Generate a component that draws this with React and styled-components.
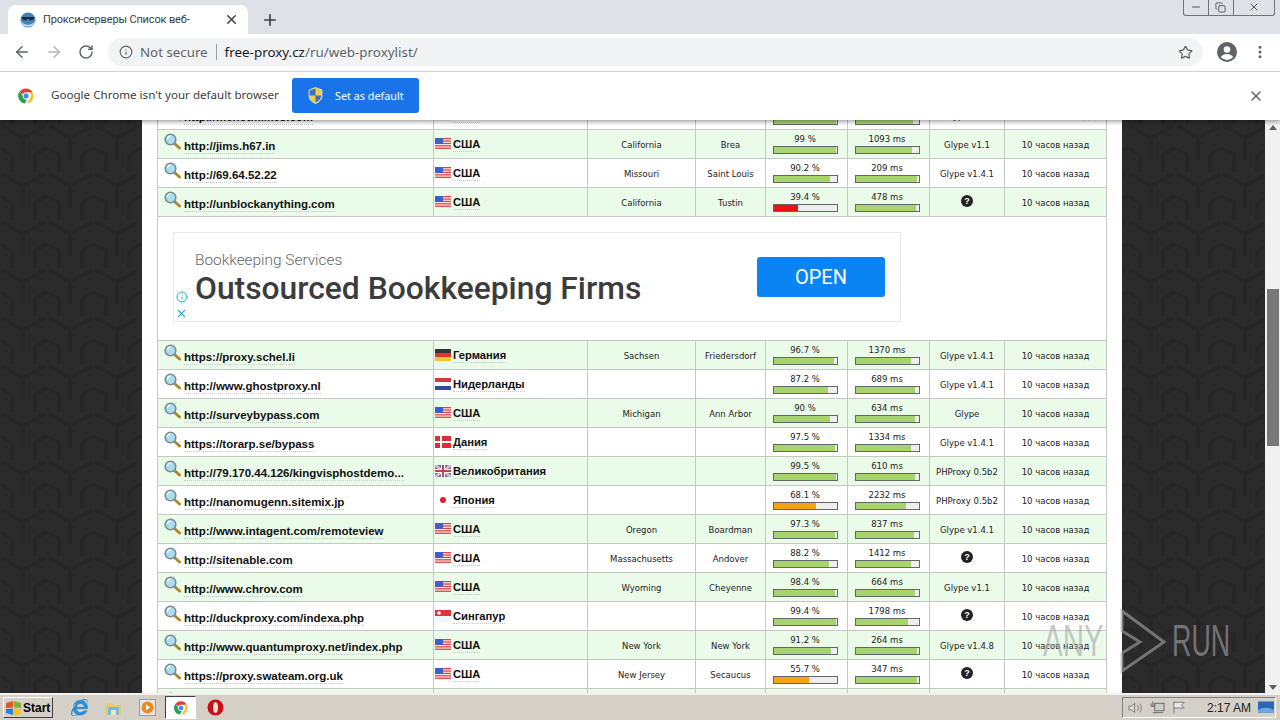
import * as React from "react";
import styled, { createGlobalStyle } from "styled-components";
import { ArrowLeft, ArrowRight, RotateCw, Info, Star, X, Plus, EllipsisVertical, Minus, Copy } from "lucide-react";
import { FaInternetExplorer } from "react-icons/fa";

const tile = encodeURIComponent(
  `<svg xmlns="http://www.w3.org/2000/svg" width="47" height="48"><rect width="47" height="48" fill="#2b2b2b"/><g fill="none" stroke="#262626" stroke-width="4"><path d="M2 6l21 12 22-12M23 18v22M0 28l12 7v13M47 28l-12 7v13M12 0v4M35 0v4"/></g></svg>`
);

const GlobalStyle = createGlobalStyle`
  html, body {
    margin: 0;
    padding: 0;
    overflow: hidden;
  }
  * {
    box-sizing: border-box;
  }
`;

const Screen = styled.div`
  width: 1280px;
  height: 720px;
  display: flex;
  flex-direction: column;
  overflow: hidden;
  position: relative;
  font-family: "Noto Sans", sans-serif;
  background: #fff;
`;

const TabStrip = styled.div`
  height: 34px;
  background: #dee1e6;
  display: flex;
  align-items: flex-end;
  padding-left: 8px;
  position: relative;
`;

const Tab = styled.div`
  width: 240px;
  height: 29px;
  background: #fff;
  border-radius: 8px 8px 0 0;
  display: flex;
  align-items: center;
  padding: 0 9px 0 12px;
  gap: 7px;
`;

const TabTitle = styled.span`
  flex: 1;
  font-family: Roboto, sans-serif;
  font-size: 11px;
  letter-spacing: -0.15px;
  color: #3c4043;
  white-space: nowrap;
  overflow: hidden;
`;

const NewTab = styled.div`
  width: 44px;
  height: 29px;
  display: flex;
  align-items: center;
  justify-content: center;
  color: #3c4043;
`;

const WindowControls = styled.div`
  position: absolute;
  top: -1px;
  right: 5px;
  width: 92px;
  height: 17px;
  display: flex;
  border: 1px solid #6e7379;
  border-top: none;
  border-radius: 0 0 3px 3px;
`;

const WindowButton = styled.div`
  flex: ${(props) => props.$grow || 1};
  display: flex;
  align-items: center;
  justify-content: center;
  color: #555;
  border-left: ${(props) => (props.$first ? "none" : "1px solid #6e7379")};
`;

const Toolbar = styled.div`
  height: 38px;
  background: #fff;
  border-bottom: 1px solid #dadce0;
  display: flex;
  align-items: center;
  padding: 0 12px 1px 12px;
`;

const NavButton = styled.div`
  width: 20px;
  height: 20px;
  margin-right: 12px;
  display: flex;
  align-items: center;
  justify-content: center;
  color: ${(props) => (props.$disabled ? "#b4b7bb" : "#5f6368")};
`;

const Omnibox = styled.div`
  width: 1095px;
  height: 28px;
  background: #f1f3f4;
  border-radius: 14px;
  display: flex;
  align-items: center;
  padding: 0 10px 0 11px;
  font-size: 13.4px;
`;

const NotSecure = styled.span`
  color: #5f6368;
  margin-left: 7px;
  font-size: 13.3px;
`;

const Divider = styled.span`
  width: 1px;
  height: 16px;
  background: #9aa0a6;
  margin: 0 8px 0 8px;
`;

const Host = styled.span`
  color: #202124;
`;

const UrlPath = styled.span`
  color: #5f6368;
`;

const Spacer = styled.div`
  flex: 1;
`;

const ToolIcons = styled.div`
  display: flex;
  align-items: center;
  margin-left: 14px;
  gap: 15px;
  color: #5f6368;
`;

const InfoBar = styled.div`
  height: 48px;
  background: #fff;
  display: flex;
  align-items: center;
  padding: 0 16px 1px 17px;
  position: relative;
  z-index: 2;
  box-shadow: 0 2px 4px rgba(0, 0, 0, 0.35);
`;

const InfoText = styled.span`
  font-size: 11.6px;
  color: #3c4043;
  margin: 0 0 2px 16px;
  width: 241px;
  white-space: nowrap;
`;

const DefaultButton = styled.div`
  width: 127px;
  height: 35px;
  background: #1a73e8;
  border-radius: 3px;
  display: flex;
  align-items: center;
  padding: 0 0 1px 16px;
  gap: 12px;
  color: #fff;
  font-size: 10.8px;
`;

const Body = styled.div`
  flex: 1;
  display: flex;
  min-height: 0;
  position: relative;
`;

const Page = styled.div`
  flex: 1;
  overflow: hidden;
  padding-left: 142px;
  background: #2b2b2b url("data:image/svg+xml,${tile}");
`;

const Sheet = styled.div`
  width: 980px;
  height: 100%;
  background: #fff;
  padding: 0 15px;
  overflow: hidden;
`;

const Table = styled.table`
  width: 949px;
  margin-top: -20px;
  border-collapse: collapse;
  table-layout: fixed;
  font-family: "DejaVu Sans", sans-serif;
  font-size: 8.5px;
  color: #222;
`;

const Row = styled.tr`
  height: 29px;
  background: ${(props) => (props.$odd ? "#eafbea" : "#fff")};
`;

const Cell = styled.td`
  border: 1px solid #c3c9c3;
  padding: 0;
  text-align: center;
  vertical-align: middle;
  overflow: hidden;
  white-space: nowrap;
`;

const TextCell = styled(Cell)`
  padding-top: 2px;
`;

const UrlCell = styled.div`
  display: flex;
  align-items: flex-start;
  height: 28px;
  padding: 3px 0 0 6px;
`;

const UrlLink = styled.span`
  font-family: "Liberation Sans", sans-serif;
  font-weight: 700;
  font-size: 11.5px;
  color: #111;
  margin: 6px 0 0 3px;
  line-height: 14px;
  border-bottom: 1px dotted #c8c8c8;
`;

const CountryCell = styled.div`
  display: flex;
  align-items: center;
  height: 28px;
  padding-left: 1px;
  gap: 2px;
`;

const CountryName = styled.span`
  font-family: "Liberation Sans", sans-serif;
  font-weight: 700;
  font-size: 11.2px;
  color: #111;
  line-height: 13px;
  margin-top: 2px;
  border-bottom: 1px dotted #c8c8c8;
`;

const MeterWrap = styled.div`
  display: flex;
  flex-direction: column;
  align-items: center;
  padding: 0 3px 2px 0;
`;

const MeterLabel = styled.span`
  line-height: 13px;
  height: 13px;
`;

const MeterTrack = styled.div`
  width: 65px;
  height: 8px;
  background: #eee;
  border: 1px solid #666;
`;

const MeterFill = styled.div`
  height: 100%;
  background: ${(props) => props.$color};
`;

const HelpDot = styled.span`
  display: inline-flex;
  width: 12px;
  height: 12px;
  margin-bottom: 5px;
  border-radius: 50%;
  background: #222;
  color: #fff;
  font-family: "Liberation Sans", sans-serif;
  font-size: 9px;
  font-weight: 700;
  align-items: center;
  justify-content: center;
`;

const AdCell = styled.td`
  border: 1px solid #c3c9c3;
  height: 124px;
  padding: 15px 0 18px 15px;
  background: #fff;
`;

const AdBox = styled.div`
  width: 728px;
  height: 90px;
  border: 1px solid #e8e8e8;
  position: relative;
  display: flex;
  align-items: center;
  padding: 0 15px 0 21px;
  font-family: Roboto, sans-serif;
`;

const AdText = styled.div`
  flex: 1;
  padding-top: 2px;
`;

const AdKicker = styled.div`
  font-size: 15.4px;
  font-weight: 300;
  color: #666;
  line-height: 20px;
`;

const AdTitle = styled.div`
  font-size: 31.8px;
  font-weight: 500;
  color: #3c3c3c;
  line-height: 38px;
  margin-top: -1px;
`;

const AdButton = styled.div`
  width: 128px;
  height: 40px;
  padding-bottom: 1px;
  background: #0a84f2;
  border-radius: 3px;
  color: #fff;
  font-size: 20px;
  display: flex;
  align-items: center;
  justify-content: center;
`;

const AdChoices = styled.div`
  position: absolute;
  left: 1px;
  bottom: 1px;
  display: flex;
  flex-direction: column;
  gap: 4px;
  align-items: center;
  color: #1fb0c9;
`;

const Scrollbar = styled.div`
  width: 15px;
  background: #f1f1f1;
  display: flex;
  flex-direction: column;
  align-items: center;
  padding-bottom: 3px;
`;

const ScrollArrow = styled.div`
  width: 0;
  height: 0;
  margin-top: ${(props) => (props.$down ? "auto" : "5px")};
  border-left: 4px solid transparent;
  border-right: 4px solid transparent;
  border-bottom: ${(props) => (props.$down ? "none" : "5px solid #606060")};
  border-top: ${(props) => (props.$down ? "5px solid #606060" : "none")};
`;

const ScrollThumb = styled.div`
  width: 12px;
  height: 157px;
  margin-top: 159px;
  background: #787878;
`;

const Watermark = styled.div`
  position: absolute;
  right: 50px;
  bottom: 20px;
  display: flex;
  align-items: center;
  color: rgba(165, 165, 165, 0.6);
  font-family: "Liberation Sans", sans-serif;
  font-size: 44px;
  line-height: 1;
  pointer-events: none;
`;

const WatermarkWord = styled.span`
  display: inline-block;
  transform: scaleX(${(props) => props.$scale});
  transform-origin: left;
  width: ${(props) => props.$width}px;
  margin: ${(props) => props.$margin};
`;

const Taskbar = styled.div`
  height: 27px;
  background: #d4d0c8;
  border-top: 2px solid #f4f2ec;
  display: flex;
  align-items: center;
  padding: 0 4px 0 3px;
  position: relative;
  z-index: 2;
`;

const StartButton = styled.div`
  width: 50px;
  height: 21px;
  display: flex;
  align-items: center;
  gap: 1px;
  padding-left: 1px;
  font-family: "Liberation Sans", sans-serif;
  font-weight: 700;
  font-size: 12px;
  color: #000;
  background: #d4d0c8;
  border: 1px solid;
  border-color: #fff #404040 #404040 #fff;
`;

const QuickLaunch = styled.div`
  display: flex;
  align-items: center;
  margin-left: 18px;
  gap: 17px;
`;

const ActiveTask = styled.div`
  width: 31px;
  height: 23px;
  margin: 0 -6px 0 -8px;
  background: #fff;
  border: 1px solid;
  border-color: #404040 #fff #fff #404040;
  display: flex;
  align-items: center;
  justify-content: center;
`;

const Tray = styled.div`
  margin-left: auto;
  width: 154px;
  height: 21px;
  border: 1px solid;
  border-color: #808080 #fff #fff #808080;
  display: flex;
  align-items: center;
  padding: 0 1px 0 5px;
  gap: 7px;
  font-family: "Liberation Sans", sans-serif;
  font-size: 12px;
  color: #222;
`;

const Clock = styled.span`
  margin-left: 13px;
  white-space: nowrap;
`;

const ChromeLogo = ({ size = 18 }) => (
  <svg width={size} height={size} viewBox="0 0 48 48">
    <path d="M24 4a20 20 0 0 1 17.3 10H24a10 10 0 0 0-9.4 6.6L7.7 11A20 20 0 0 1 24 4z" fill="#db4437" />
    <path d="M41.3 14A20 20 0 0 1 26 43.9l8.6-14.9A10 10 0 0 0 32 14z" fill="#fbc02d" />
    <path d="M7.7 11l8.6 14.9A10 10 0 0 0 26 33.8L21.3 43.8A20 20 0 0 1 7.7 11z" fill="#2e9e4f" />
    <circle cx="24" cy="24" r="8" fill="#4285f4" stroke="#fff" strokeWidth="2" />
  </svg>
);

const UacShield = () => (
  <svg width="15" height="17" viewBox="0 0 15 17">
    <path d="M7.5 0.5L14 3v5.5c0 4-3 6.5-6.5 8C4 15 1 12.5 1 8.5V3z" fill="#f2cc45" stroke="#dfe8f4" strokeWidth="0.8" />
    <path d="M7.5 1.5V8.5H1.6V3.6zM7.5 8.5H13.3C13 11.8 10.5 14 7.5 15.3z" fill="#3d6fc2" />
  </svg>
);

const Favicon = () => (
  <svg width="16" height="16" viewBox="0 0 16 16">
    <circle cx="8" cy="8" r="7.5" fill="#3f86b8" />
    <path d="M1 9c3 5 11 5 14 0v2c-2 5-12 5-14 0z" fill="#bcd8ea" />
    <path d="M1.5 5h13l-1 2.5-3.5 1L8 6.5 6 8.5 2.5 7.5z" fill="#1c2b38" />
  </svg>
);

const Account = () => (
  <svg width="20" height="20" viewBox="0 0 20 20">
    <circle cx="10" cy="10" r="10" fill="#5f6368" />
    <circle cx="10" cy="7.5" r="3.3" fill="#fff" />
    <path d="M3.8 15c1.5-2.3 4-3 6.2-3s4.7.7 6.2 3a8 8 0 0 1-12.4 0z" fill="#fff" />
  </svg>
);

const Magnifier = () => (
  <svg width="17" height="17" viewBox="0 0 17 17">
    <path d="M10.5 10.5l5 4.5" stroke="#a98a2c" strokeWidth="3" strokeLinecap="round" />
    <circle cx="6.5" cy="6.5" r="5.3" fill="#a9dcec" stroke="#7d8a90" strokeWidth="1.6" />
    <path d="M3.5 6a3.5 3.5 0 0 1 3-3" stroke="#e8f7fb" strokeWidth="1.3" fill="none" />
  </svg>
);

const FlagFrame = ({ children }) => (
  <svg width="16" height="12" viewBox="0 0 16 12">
    {children}
  </svg>
);

const flags = {
  us: (
    <FlagFrame>
      <rect width="16" height="12" rx="1" fill="#f4f4f4" />
      {[0, 2.4, 4.8, 7.2, 9.6].map((y) => (
        <rect key={y} y={y} width="16" height="1.3" fill="#d9453f" />
      ))}
      <rect width="8" height="6" fill="#3f5fc4" />
    </FlagFrame>
  ),
  de: (
    <FlagFrame>
      <rect width="16" height="4" fill="#333" />
      <rect y="4" width="16" height="4" fill="#d8372c" />
      <rect y="8" width="16" height="4" fill="#f2c230" />
    </FlagFrame>
  ),
  nl: (
    <FlagFrame>
      <rect width="16" height="4" fill="#cf3a3f" />
      <rect y="4" width="16" height="4" fill="#f6f6f6" />
      <rect y="8" width="16" height="4" fill="#2f4c9c" />
    </FlagFrame>
  ),
  dk: (
    <FlagFrame>
      <rect width="16" height="12" fill="#d8303a" />
      <rect x="5" width="2" height="12" fill="#fff" />
      <rect y="5" width="16" height="2" fill="#fff" />
    </FlagFrame>
  ),
  gb: (
    <FlagFrame>
      <rect width="16" height="12" fill="#6a7bb0" />
      <path d="M0 0l16 12M16 0L0 12" stroke="#fff" strokeWidth="2" />
      <path d="M0 0l16 12M16 0L0 12" stroke="#c8505a" strokeWidth="0.7" />
      <rect x="6" width="4" height="12" fill="#fff" />
      <rect y="4" width="16" height="4" fill="#fff" />
      <rect x="7" width="2" height="12" fill="#c8404a" />
      <rect y="5" width="16" height="2" fill="#c8404a" />
    </FlagFrame>
  ),
  jp: (
    <FlagFrame>
      <rect width="16" height="12" fill="#fff" />
      <circle cx="8" cy="6" r="3" fill="#e0202c" />
    </FlagFrame>
  ),
  sg: (
    <FlagFrame>
      <rect width="16" height="6" fill="#e0333c" />
      <rect y="6" width="16" height="6" fill="#f0f6f6" />
      <circle cx="4" cy="3" r="1.8" fill="#fff" />
    </FlagFrame>
  ),
};

const columns = [276, 154, 108, 70, 82, 82, 75, 102];

const meterColor = (value) => {
  if (value < 50) return "#ee1111";
  if (value < 70) return "#f5a314";
  return "#a6d46f";
};

const Meter = ({ label, value }) => (
  <MeterWrap>
    <MeterLabel>{label}</MeterLabel>
    <MeterTrack>
      <MeterFill $color={meterColor(value)} style={{ width: `${value}%` }} />
    </MeterTrack>
  </MeterWrap>
);

const topRows = [
  ["http://mehotmilkes.com", "us", "США", "California", "Brea", 99, 900, "Glype v1.1"],
  ["http://jims.h67.in", "us", "США", "California", "Brea", 99, 1093, "Glype v1.1"],
  ["http://69.64.52.22", "us", "США", "Missouri", "Saint Louis", 90.2, 209, "Glype v1.4.1"],
  ["http://unblockanything.com", "us", "США", "California", "Tustin", 39.4, 478, null],
];

const bottomRows = [
  ["https://proxy.schel.li", "de", "Германия", "Sachsen", "Friedersdorf", 96.7, 1370, "Glype v1.4.1"],
  ["http://www.ghostproxy.nl", "nl", "Нидерланды", "", "", 87.2, 689, "Glype v1.4.1"],
  ["http://surveybypass.com", "us", "США", "Michigan", "Ann Arbor", 90, 634, "Glype"],
  ["https://torarp.se/bypass", "dk", "Дания", "", "", 97.5, 1334, "Glype v1.4.1"],
  ["http://79.170.44.126/kingvisphostdemo...", "gb", "Великобритания", "", "", 99.5, 610, "PHProxy 0.5b2"],
  ["http://nanomugenn.sitemix.jp", "jp", "Япония", "", "", 68.1, 2232, "PHProxy 0.5b2"],
  ["http://www.intagent.com/remoteview", "us", "США", "Oregon", "Boardman", 97.3, 837, "Glype v1.4.1"],
  ["http://sitenable.com", "us", "США", "Massachusetts", "Andover", 88.2, 1412, null],
  ["http://www.chrov.com", "us", "США", "Wyoming", "Cheyenne", 98.4, 664, "Glype v1.1"],
  ["http://duckproxy.com/indexa.php", "sg", "Сингапур", "", "", 99.4, 1798, null],
  ["http://www.quantumproxy.net/index.php", "us", "США", "New York", "New York", 91.2, 264, "Glype v1.4.8"],
  ["https://proxy.swateam.org.uk", "us", "США", "New Jersey", "Secaucus", 55.7, 347, null],
  ["http://proxy.example.org", "us", "США", "", "", 90, 500, "Glype"],
];

const ProxyRow = ({ row, odd }) => {
  const [url, flag, country, region, city, uptime, ms, script] = row;
  return (
    <Row $odd={odd}>
      <Cell>
        <UrlCell>
          <Magnifier />
          <UrlLink>{url}</UrlLink>
        </UrlCell>
      </Cell>
      <Cell>
        <CountryCell>
          {flags[flag]}
          <CountryName>{country}</CountryName>
        </CountryCell>
      </Cell>
      <TextCell>{region}</TextCell>
      <TextCell>{city}</TextCell>
      <Cell>
        <Meter label={`${uptime} %`} value={uptime} />
      </Cell>
      <Cell>
        <Meter label={`${ms} ms`} value={100 - ms / 112} />
      </Cell>
      <TextCell>{script || <HelpDot>?</HelpDot>}</TextCell>
      <TextCell>10 часов назад</TextCell>
    </Row>
  );
};

const App = () => (
  <Screen>
    <GlobalStyle />
    <TabStrip>
      <Tab>
        <Favicon />
        <TabTitle>Прокси-серверы Список веб-</TabTitle>
        <X size={15} strokeWidth={2.5} color="#444" />
      </Tab>
      <NewTab>
        <Plus size={18} strokeWidth={2.2} />
      </NewTab>
      <WindowControls>
        <WindowButton $first>
          <Minus size={12} />
        </WindowButton>
        <WindowButton>
          <Copy size={11} />
        </WindowButton>
        <WindowButton $grow={1.7}>
          <X size={12} />
        </WindowButton>
      </WindowControls>
    </TabStrip>
    <Toolbar>
      <NavButton>
        <ArrowLeft size={18} strokeWidth={2} />
      </NavButton>
      <NavButton $disabled>
        <ArrowRight size={18} strokeWidth={2} />
      </NavButton>
      <NavButton>
        <RotateCw size={16} strokeWidth={2.2} />
      </NavButton>
      <Omnibox>
        <Info size={14} color="#5f6368" />
        <NotSecure>Not secure</NotSecure>
        <Divider />
        <Host>free-proxy.cz</Host>
        <UrlPath>/ru/web-proxylist/</UrlPath>
        <Spacer />
        <Star size={15} color="#5f6368" strokeWidth={2} />
      </Omnibox>
      <ToolIcons>
        <Account />
        <EllipsisVertical size={16} strokeWidth={2.5} />
      </ToolIcons>
    </Toolbar>
    <InfoBar>
      <ChromeLogo />
      <InfoText>Google Chrome isn't your default browser</InfoText>
      <DefaultButton>
        <UacShield />
        Set as default
      </DefaultButton>
      <Spacer />
      <X size={16} strokeWidth={2.2} color="#5f6368" />
    </InfoBar>
    <Body>
      <Page>
        <Sheet>
          <Table>
            <colgroup>
              {columns.map((w, i) => (
                <col key={i} width={w} />
              ))}
            </colgroup>
            <tbody>
              {topRows.map((row, i) => (
                <ProxyRow key={row[0]} row={row} odd={i % 2 === 1} />
              ))}
              <tr>
                <AdCell colSpan={8}>
                  <AdBox>
                    <AdText>
                      <AdKicker>Bookkeeping Services</AdKicker>
                      <AdTitle>Outsourced Bookkeeping Firms</AdTitle>
                    </AdText>
                    <AdButton>OPEN</AdButton>
                    <AdChoices>
                      <Info size={12} />
                      <X size={13} />
                    </AdChoices>
                  </AdBox>
                </AdCell>
              </tr>
              {bottomRows.map((row, i) => (
                <ProxyRow key={row[0]} row={row} odd={i % 2 === 0} />
              ))}
            </tbody>
          </Table>
        </Sheet>
      </Page>
      <Scrollbar>
        <ScrollArrow />
        <ScrollThumb />
        <ScrollArrow $down />
      </Scrollbar>
      <Watermark>
        <WatermarkWord $scale={0.67} $width={60} $margin="0 16px 0 0">ANY</WatermarkWord>
        <svg width="48" height="64" viewBox="0 0 48 64" fill="none" stroke="currentColor" strokeWidth="3">
          <path d="M3 2l42 31L3 62V44l18-11L3 22z" />
        </svg>
        <WatermarkWord $scale={0.61} $width={58} $margin="0 0 0 5px">RUN</WatermarkWord>
      </Watermark>
    </Body>
    <Taskbar>
      <StartButton>
        <svg width="17" height="16" viewBox="0 0 17 16">
          <path d="M1 3l7-2v6.5L1 8z" fill="#e8562a" />
          <path d="M9 1l7 2v5l-7-.5z" fill="#7db52e" />
          <path d="M1 9l7-.5V15l-7-2z" fill="#2f7fd6" />
          <path d="M9 8.5l7 .5v5l-7 2z" fill="#f2c230" />
        </svg>
        Start
      </StartButton>
      <QuickLaunch>
        <FaInternetExplorer size={17} color="#2d8fd8" />
        <svg width="17" height="17" viewBox="0 0 17 17">
          <path d="M1 4h6l1 2h8v10H1z" fill="#e9c874" />
          <rect x="3" y="8" width="11" height="8" fill="#7cb8dc" />
          <rect x="6" y="11" width="5" height="5" fill="#f3e7be" />
        </svg>
        <svg width="17" height="17" viewBox="0 0 17 17">
          <rect x="0.5" y="0.5" width="16" height="16" fill="#dfe9f3" stroke="#7ea2c6" />
          <circle cx="8.5" cy="8.5" r="6" fill="#ec8a1c" />
          <path d="M7 5.5l4 3-4 3z" fill="#fff" />
        </svg>
        <ActiveTask>
          <ChromeLogo size={16} />
        </ActiveTask>
        <svg width="17" height="17" viewBox="0 0 17 17">
          <circle cx="8.5" cy="8.5" r="8" fill="#cc0f16" />
          <ellipse cx="8.5" cy="8.5" rx="2.5" ry="5.5" fill="#f6e3e0" />
        </svg>
      </QuickLaunch>
      <Tray>
        <svg width="16" height="14" viewBox="0 0 16 14" fill="none" stroke="#777">
          <path d="M1 5h3l3-3v10L4 9H1z" fill="#ddd" />
          <path d="M10 4c1.5 2 1.5 4 0 6M12.5 2.5c2.3 3 2.3 6 0 9" />
        </svg>
        <svg width="16" height="15" viewBox="0 0 16 15" fill="none" stroke="#666">
          <rect x="5" y="3" width="10" height="8" fill="#ccc" />
          <path d="M3 1v6M1 3v3h4V3M3 13h11" />
        </svg>
        <svg width="16" height="15" viewBox="0 0 16 15" fill="none" stroke="#777">
          <path d="M2 1v13M2 2h11l-3 3 3 3H2" fill="#e8e8e8" />
        </svg>
        <Clock>2:17 AM</Clock>
        <svg width="17" height="14" viewBox="0 0 17 14">
          <rect width="17" height="12" fill="#2a68b8" />
          <path d="M0 9c5-3 12-3 17 0v3H0z" fill="#6fa8dc" />
        </svg>
      </Tray>
    </Taskbar>
  </Screen>
);

export default App;
